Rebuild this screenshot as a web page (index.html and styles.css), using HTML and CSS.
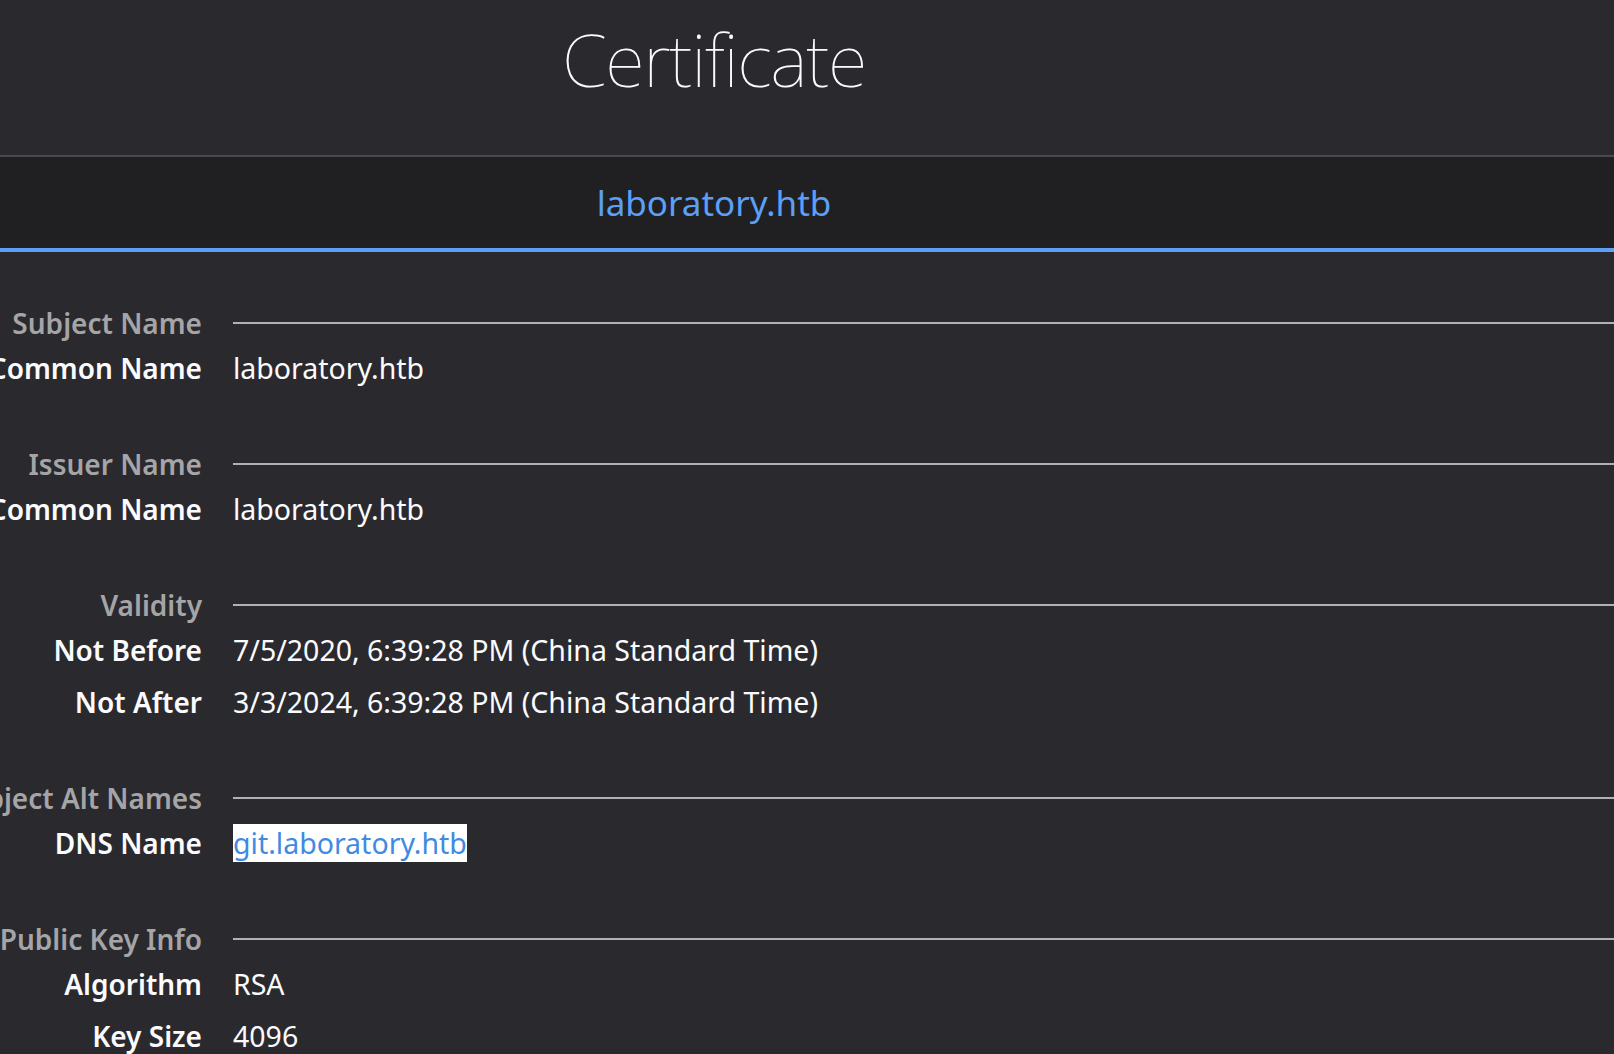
FILE: index.html
```html
<!DOCTYPE html>
<html lang="en">
<head>
<meta charset="utf-8">
<title>Certificate</title>
<link rel="stylesheet" href="styles.css">
</head>
<body>
<header class="page-header">
  <h1 class="title">Certificate</h1>
</header>
<nav class="tabs">
  <div class="tab-inner"><span class="tab selected">laboratory.htb</span></div>
</nav>
<main class="info">
  <section class="section">
    <div class="sec-label">Subject Name</div><div class="sec-rule"></div>
    <div class="key">Common Name</div><div class="val">laboratory.htb</div>
  </section>
  <section class="section">
    <div class="sec-label">Issuer Name</div><div class="sec-rule"></div>
    <div class="key">Common Name</div><div class="val">laboratory.htb</div>
  </section>
  <section class="section">
    <div class="sec-label">Validity</div><div class="sec-rule"></div>
    <div class="key">Not Before</div><div class="val">7/5/2020, 6:39:28 PM (China Standard Time)</div>
    <div class="key">Not After</div><div class="val">3/3/2024, 6:39:28 PM (China Standard Time)</div>
  </section>
  <section class="section">
    <div class="sec-label">Subject Alt Names</div><div class="sec-rule"></div>
    <div class="key">DNS Name</div><div class="val"><span class="selected-text">git.laboratory.htb</span></div>
  </section>
  <section class="section">
    <div class="sec-label">Public Key Info</div><div class="sec-rule"></div>
    <div class="key">Algorithm</div><div class="val">RSA</div>
    <div class="key">Key Size</div><div class="val">4096</div>
  </section>
</main>
</body>
</html>
```
FILE: styles.css
```css
html, body {
  margin: 0;
  padding: 0;
  background: #2a2a2e;
  color: #fbfbfe;
  font-family: "Noto Sans", "Open Sans", sans-serif;
  overflow: hidden;
}

.page-header {
  border-bottom: 2px solid #4a4a4f;
}

.title {
  width: 1428px;
  margin: 0;
  padding: 23px 0 61px;
  font-size: 73px;
  line-height: 71px;
  font-weight: 100;
  letter-spacing: -1.4px;
  text-align: center;
  color: #fbfbfe;
}

.tabs {
  background: #202023;
  border-bottom: 4px solid #5ba0f6;
}

.tab-inner {
  width: 1428px;
  height: 91px;
  display: flex;
  align-items: center;
  justify-content: center;
}

.tab {
  font-size: 35px;
  color: #5ba0f6;
}

.info {
  padding-top: 52px;
}

.section {
  display: grid;
  grid-template-columns: 202px 1fr;
  grid-template-rows: 38px;
  grid-auto-rows: 52px;
  column-gap: 31px;
  margin-bottom: 51px;
  font-size: 28.5px;
}

.sec-label,
.key {
  display: flex;
  justify-content: flex-end;
  align-items: center;
  white-space: nowrap;
  font-weight: 600;
  font-size: 28px;
}

.sec-label {
  height: 38px;
  color: #a5a5a8;
}

.sec-rule {
  height: 38px;
  display: flex;
  align-items: center;
}

.sec-rule::before {
  content: "";
  flex: 1;
  height: 2px;
  margin-top: -1px;
  background: #b1b1b3;
}

.key {
  color: #fbfbfe;
}

.val {
  display: flex;
  align-items: center;
  white-space: nowrap;
}

.selected-text {
  background: #ffffff;
  color: #3f8ae3;
}
```
